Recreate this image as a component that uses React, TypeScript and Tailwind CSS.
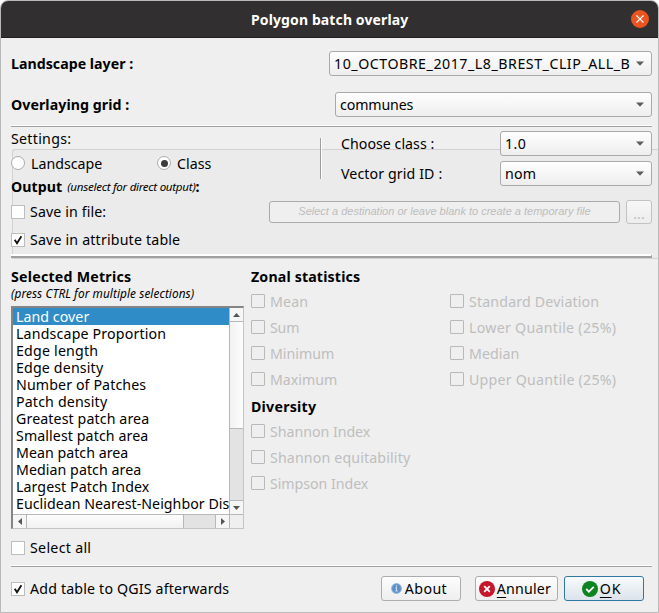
import { useLayoutEffect, useRef, useState, type ReactNode } from "react";

/* One line of text whose tracking is computed so that it spans `w` pixels. */
function Text({ w, className = "", children }: { w: number; className?: string; children: ReactNode }) {
  const ref = useRef<HTMLSpanElement>(null);
  const [spacing, setSpacing] = useState(0);
  useLayoutEffect(() => {
    const el = ref.current;
    if (!el) return;
    const count = (el.textContent ?? "").length;
    setSpacing((w + 0.3 - el.getBoundingClientRect().width) / count);
  }, [w]);
  return (
    <span ref={ref} className={`inline-block shrink-0 whitespace-pre ${className}`} style={{ letterSpacing: `${spacing}px` }}>
      {children}
    </span>
  );
}

function Combo({ text, w, className }: { text: string; w: number; className: string }) {
  return (
    <div
      className={`flex h-[25px] shrink-0 items-center justify-between rounded-[3px] border border-[#a9a9a9] bg-gradient-to-b from-[#fefefe] to-[#eeeeee] pr-[7px] pl-1 ${className}`}
    >
      <Text w={w}>{text}</Text>
      <svg width="8" height="5" viewBox="0 0 8 5">
        <path d="M0 0.5h8L4 4.8z" fill="#5c5c5c" />
      </svg>
    </div>
  );
}

function Check({ label, w, checked = false, disabled = false }: { label: string; w: number; checked?: boolean; disabled?: boolean }) {
  return (
    <div className={`flex items-center gap-[5px] ${disabled ? "text-[#bebebe]" : "text-black"}`}>
      <span
        className={`flex size-[14px] shrink-0 items-center justify-center border ${
          disabled ? "rounded-[1px] border-[#b9b9b9] bg-[#efefef]" : "border-[#bdbdbd] bg-white"
        }`}
      >
        {checked && (
          <svg width="12" height="12" viewBox="0 0 12 12" fill="none">
            <path d="M2.7 5.8L5 9.3L9.4 2.3" stroke="#111" strokeWidth="1.8" />
          </svg>
        )}
      </span>
      <Text w={w}>{label}</Text>
    </div>
  );
}

function Radio({ label, w, checked = false }: { label: string; w: number; checked?: boolean }) {
  return (
    <div className="flex items-center gap-[6px]">
      <span className="flex size-[14px] items-center justify-center rounded-full border border-[#ababab] bg-white">
        {checked && <span className="size-[7px] rounded-full bg-[#3c3c3c]" />}
      </span>
      <Text w={w}>{label}</Text>
    </div>
  );
}

const metrics: [string, number][] = [
  ["Land cover", 73],
  ["Landscape Proportion", 150],
  ["Edge length", 82],
  ["Edge density", 87],
  ["Number of Patches", 130],
  ["Patch density", 91],
  ["Greatest patch area", 133],
  ["Smallest patch area", 132],
  ["Mean patch area", 112],
  ["Median patch area", 125],
  ["Largest Patch Index", 133],
  ["Euclidean Nearest-Neighbor Dis", 213],
];

const zonal: [string, number][] = [
  ["Mean", 38],
  ["Standard Deviation", 130],
  ["Sum", 29],
  ["Lower Quantile (25%)", 147],
  ["Minimum", 64],
  ["Median", 50],
  ["Maximum", 67],
  ["Upper Quantile (25%)", 147],
];

const diversity: [string, number][] = [
  ["Shannon Index", 100],
  ["Shannon equitability", 140],
  ["Simpson Index", 98],
];

function MetricsList() {
  return (
    <div className="flex h-[223px] w-[233px] flex-col border-t-2 border-r border-b border-l-2 border-t-[#858585] border-r-[#c4c4c4] border-b-[#c4c4c4] border-l-[#858585] bg-white">
      <div className="flex h-[206px]">
        <div className="w-[216px] overflow-hidden">
          {metrics.map(([name, w], i) => (
            <div
              key={name}
              className={`flex h-[17px] items-center pl-[3px] ${i === 0 ? "bg-[#308cc6] text-white" : ""}`}
            >
              <Text w={w}>{name}</Text>
            </div>
          ))}
        </div>
        <div className="flex w-[14px] flex-col border-l border-[#b8b8b8] bg-[#e3e3e3]">
          <div className="flex h-[14px] items-center justify-center border-b border-[#b8b8b8] bg-[#f6f6f6]">
            <svg width="7" height="4" viewBox="0 0 7 4"><path d="M0 4h7L3.5 0z" fill="#555" /></svg>
          </div>
          <div className="h-[107px] border-b border-[#b8b8b8] bg-gradient-to-r from-[#f1f1f1] to-[#fdfdfd]" />
          <div className="h-[71px]" />
          <div className="flex h-[14px] items-center justify-center border-t border-[#b8b8b8] bg-[#f6f6f6]">
            <svg width="7" height="4" viewBox="0 0 7 4"><path d="M0 0h7L3.5 4z" fill="#555" /></svg>
          </div>
        </div>
      </div>
      <div className="flex h-[14px] border-t border-[#b8b8b8] bg-[#e3e3e3]">
        <div className="flex w-[14px] items-center justify-center border-r border-[#b8b8b8] bg-[#f6f6f6]">
          <svg width="4" height="7" viewBox="0 0 4 7"><path d="M4 0v7L0 3.5z" fill="#555" /></svg>
        </div>
        <div className="w-[157px] border-r border-[#b8b8b8] bg-gradient-to-b from-[#fdfdfd] to-[#f1f1f1]" />
        <div className="w-[31px]" />
        <div className="flex w-[14px] items-center justify-center border-l border-[#b8b8b8] bg-[#f6f6f6]">
          <svg width="4" height="7" viewBox="0 0 4 7"><path d="M0 0v7L4 3.5z" fill="#555" /></svg>
        </div>
        <div className="w-[14px] border-l border-[#b8b8b8] bg-[#efefef]" />
      </div>
    </div>
  );
}

const rule = "h-[2px] w-[641px] border-t border-b border-t-white border-b-[#a0a0a0]";
const button = "flex h-[25px] items-center justify-center rounded-[3px] border";

export default function App() {
  return (
    <div className="h-[613px] w-[659px] bg-white font-['Noto_Sans','Open_Sans',sans-serif] text-[14.2px] leading-[17px] text-black">
      <div className="flex h-[613px] flex-col overflow-hidden rounded-t-[8px] border border-[#b9b9b9] bg-[#efefef]">
        <header className="flex h-[37px] shrink-0 items-center border-b border-[#1f1f1f] bg-[#312f30] pr-[9px] pl-[250px] text-[14px] font-bold text-white">
          <Text w={157}>Polygon batch overlay</Text>
          <span className="ml-auto flex size-[18px] items-center justify-center rounded-full bg-[#e95420]">
            <svg width="8" height="8" viewBox="0 0 8 8"><path d="M0.5 0.5l7 7M7.5 0.5l-7 7" stroke="#fff" strokeWidth="1.2" /></svg>
          </span>
        </header>

        <div className="flex flex-col pr-[6px] pl-[10px]">
          <div className="mt-[13px] flex h-[25px] items-center justify-between font-bold">
            <Text w={122}>Landscape layer :</Text>
            <Combo text="10_OCTOBRE_2017_L8_BREST_CLIP_ALL_B" w={296} className="w-[323px] font-normal" />
          </div>
          <div className="mt-4 flex h-[25px] items-center justify-between font-bold">
            <Text w={118}>Overlaying grid :</Text>
            <Combo text="communes" w={73} className="w-[317px] font-normal" />
          </div>
          <div className={`mt-2 ${rule}`} />
        </div>

        <section className="relative h-[132px] shrink-0 pl-[10px]">
          <div className="absolute top-[22px] right-0 left-[11px] h-[110px] rounded-tl-[3px] border border-r-0 border-[#d2d2d2] bg-[#ebebeb]" />
          <div className="relative flex h-[60px] pr-[6px]">
            <div className="w-[309px]">
              <div className="flex h-6 items-center pb-[2px]"><Text w={60}>Settings:</Text></div>
              <div className="flex h-6 items-center">
                <div className="w-[146px]"><Radio label="Landscape" w={71} /></div>
                <Radio label="Class" w={34} checked />
              </div>
            </div>
            <div className="mt-[11px] h-[41px] w-[2px] border-r border-l border-r-white border-l-[#a0a0a0]" />
            <div className="ml-[19px] flex flex-1 flex-col gap-[5px] pt-1">
              <div className="flex items-center justify-between">
                <Text w={93}>Choose class :</Text>
                <Combo text="1.0" w={21} className="w-[152px]" />
              </div>
              <div className="flex items-center justify-between">
                <Text w={101}>Vector grid ID :</Text>
                <Combo text="nom" w={31} className="w-[152px]" />
              </div>
            </div>
          </div>
          <div className="relative -mt-[9px] flex h-[18px] w-[300px] items-center pb-[2px]">
            <Text w={51} className="font-bold">Output</Text>
            <Text w={128} className="ml-[5px] pt-px text-[11.6px] italic">(unselect for direct output)</Text>
            <span className="font-bold">:</span>
          </div>
          <div className="relative mt-[3px] flex h-[25px] items-center pr-[6px]">
            <Check label="Save in file:" w={76} />
            <div className="ml-auto flex h-[22px] w-[351px] items-center justify-center rounded-[3px] border border-[#aaaaaa] bg-[#efefef] font-['Liberation_Sans',Arial,sans-serif] text-[11px] text-[#bdbdbd] italic">
              <Text w={292}>Select a destination or leave blank to create a temporary file</Text>
            </div>
            <div className="ml-[6px] flex h-6 w-[26px] items-center justify-center rounded-[3px] border border-[#c2c2c2] bg-gradient-to-b from-[#f7f7f7] to-[#ededed] pt-1 text-[#bebebe]">
              ...
            </div>
          </div>
          <div className="relative mt-1 flex h-[23px] items-center"><Check label="Save in attribute table" w={150} checked /></div>
          <div className="relative mt-[3px] h-1 w-[641px] border-t-2 border-r border-b-2 border-t-white border-r-[#a0a0a0] border-b-[#a0a0a0]" />
        </section>

        <main className="flex h-[306px] shrink-0 pl-[10px]">
          <div className="w-[240px]">
            <div className="flex h-[17px] items-center pt-0 mt-[9px] font-bold"><Text w={120}>Selected Metrics</Text></div>
            <div className="mb-[5px] flex h-4 items-center text-[11.8px] italic"><Text w={183}>(press CTRL for multiple selections)</Text></div>
            <MetricsList />
            <div className="mt-[10px]"><Check label="Select all" w={61} /></div>
          </div>
          <div className="pt-[9px]">
            <div className="flex h-[17px] items-center font-bold"><Text w={109}>Zonal statistics</Text></div>
            <div className="mt-[3px] grid grid-cols-[199px_180px]">
              {zonal.map(([label, w]) => (
                <div key={label} className="flex h-[26px] items-center"><Check label={label} w={w} disabled /></div>
              ))}
            </div>
            <div className="mt-[6px] flex h-[17px] items-center font-bold"><Text w={65}>Diversity</Text></div>
            <div className="mt-[3px]">
              {diversity.map(([label, w]) => (
                <div key={label} className="flex h-[26px] items-center"><Check label={label} w={w} disabled /></div>
              ))}
            </div>
          </div>
        </main>

        <footer className="pl-[10px]">
          <div className={rule} />
          <div className="mt-[9px] flex h-[25px] items-center pr-[14px]">
            <Check label="Add table to QGIS afterwards" w={199} checked />
            <div className={`${button} ml-auto w-20 gap-[3px] border-[#adadad] bg-gradient-to-b from-[#fdfdfd] to-[#eeeeee] pr-1`}>
              <svg width="11" height="11" viewBox="0 0 11 11">
                <circle cx="5.5" cy="5.5" r="5.4" fill="#8fb3dc" />
                <circle cx="5.5" cy="5.5" r="4.4" fill="#5f8fc7" />
                <path d="M5.5 2v1.4M4.5 4.6h1v3.3M4.3 8h2.5" stroke="#c9dcf0" strokeWidth="1.1" fill="none" />
              </svg>
              <Text w={42}>About</Text>
            </div>
            <div className={`${button} ml-[14px] w-[83px] gap-[2px] border-[#adadad] bg-gradient-to-b from-[#fdfdfd] to-[#eeeeee] pr-[3px]`}>
              <svg width="16" height="16" viewBox="0 0 16 16">
                <circle cx="8" cy="8" r="8" fill="#c7162b" />
                <path d="M5.2 5.2l5.6 5.6M10.8 5.2l-5.6 5.6" stroke="#fff" strokeWidth="1.8" />
              </svg>
              <Text w={54}><span className="underline decoration-1 underline-offset-[3px]">A</span>nnuler</Text>
            </div>
            <div className={`${button} ml-[6px] w-20 gap-[2px] border-[#3078a4] bg-gradient-to-b from-[#f7fbfd] to-[#dde3eb] pr-[5px]`}>
              <svg width="16" height="16" viewBox="0 0 16 16">
                <circle cx="8" cy="8" r="8" fill="#0e8420" />
                <path d="M4.2 8l2.7 2.7L11.8 5.8" stroke="#fff" strokeWidth="1.8" fill="none" />
              </svg>
              <Text w={21}><span className="underline decoration-1 underline-offset-[3px]">O</span>K</Text>
            </div>
          </div>
        </footer>
      </div>
    </div>
  );
}
